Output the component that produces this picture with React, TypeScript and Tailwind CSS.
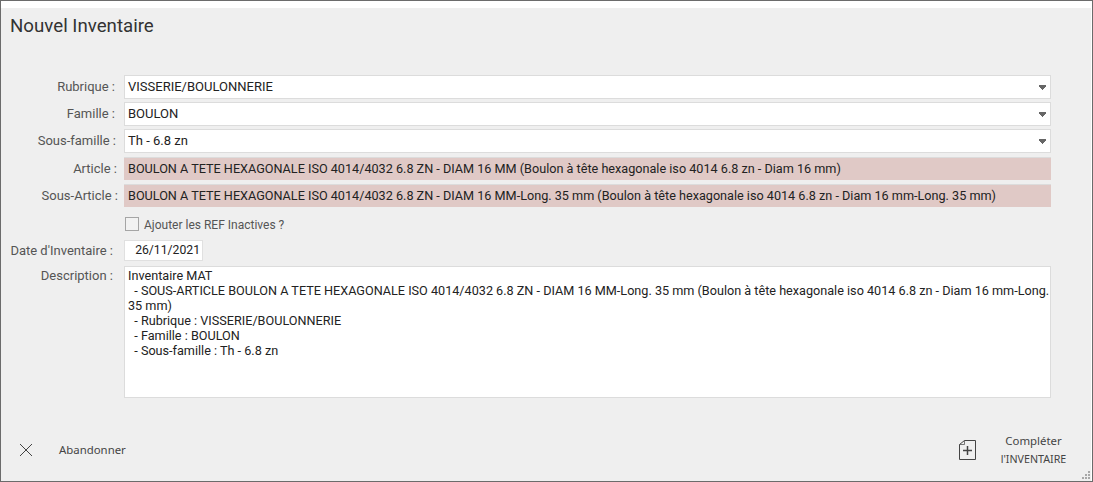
import React from 'react';

const Field: React.FC<{ className?: string; children: React.ReactNode }> = ({ className = '', children }) => (
    <div className={`w-[927px] flex items-center text-[#222] whitespace-nowrap ${className}`}>
        {children}
    </div>
);

const Label: React.FC<{ pr: string; children: React.ReactNode }> = ({ pr, children }) => (
    <div className={`w-[123px] shrink-0 text-right text-[13px] text-[#555] whitespace-nowrap ${pr}`}>{children}</div>
);

const SelectRow: React.FC<{ label: string; value: string; pr: string; mb: string }> = ({ label, value, pr, mb }) => (
    <div className={`flex items-center ${mb}`}>
        <Label pr={pr}>{label}</Label>
        <Field className="h-[24px] pl-[3px] pr-[4px] text-[13px] bg-white border border-[#dcdcdc] justify-between">
            <span>{value}</span>
            <svg width="7" height="5" viewBox="0 0 7 5" shapeRendering="crispEdges">
                <path d="M0 0H7V2H6V3H5V4H4V5H3V4H2V3H1V2H0Z" fill="#666" />
            </svg>
        </Field>
    </div>
);

const ArticleRow: React.FC<{ label: string; value: string; pr: string; mb: string }> = ({ label, value, pr, mb }) => (
    <div className={`flex items-center ${mb}`}>
        <Label pr={pr}>{label}</Label>
        <Field className="h-[23px] pl-[4px] text-[12.65px] bg-[#e0c9c6] border-t border-[#dcdcdc]">{value}</Field>
    </div>
);

export default function App() {
    return (
        <div className="w-[1093px] h-[482px] flex flex-col border border-[#6b6b6b] bg-[#efefef] shadow-[inset_-1px_0_0_#fff] font-['Roboto',sans-serif] overflow-hidden relative">
            <div className="h-[7px] bg-white shrink-0" />
            <h1 className="h-[67px] shrink-0 pl-[9px] pt-[8px] text-[18.7px] leading-[21px] text-[#333]">Nouvel Inventaire</h1>

            <SelectRow label="Rubrique :" value="VISSERIE/BOULONNERIE" pr="pr-[9px]" mb="mb-[3px]" />
            <SelectRow label="Famille :" value="BOULON" pr="pr-[9px]" mb="mb-[3px]" />
            <SelectRow label="Sous-famille :" value="Th - 6.8 zn" pr="pr-[8px]" mb="mb-[4px]" />
            <ArticleRow
                label="Article :"
                value="BOULON A TETE HEXAGONALE ISO 4014/4032 6.8 ZN - DIAM 16 MM (Boulon à tête hexagonale iso 4014 6.8 zn - Diam 16 mm)"
                pr="pr-[7px]"
                mb="mb-[4px]"
            />
            <ArticleRow
                label="Sous-Article :"
                value="BOULON A TETE HEXAGONALE ISO 4014/4032 6.8 ZN - DIAM 16 MM-Long. 35 mm (Boulon à tête hexagonale iso 4014 6.8 zn - Diam 16 mm-Long. 35 mm)"
                pr="pr-[6px]"
                mb="mb-[11px]"
            />

            <div className="flex items-center h-[14px] mb-[8px] pl-[124px]">
                <span className="w-[14px] h-[14px] mt-[-2px] border border-[#a5a5a5] bg-[#f2f2f2]" />
                <span className="ml-[5px] text-[12px] text-[#555]">Ajouter les REF Inactives ?</span>
            </div>

            <div className="flex items-center mb-[5px]">
                <Label pr="pr-[11px]">Date d'Inventaire :</Label>
                <div className="w-[79px] h-[21px] flex items-center justify-end pr-[2px] bg-white border border-[#e0e0e0] text-[12.2px] text-[#222]">
                    26/11/2021
                </div>
            </div>

            <div className="flex items-start">
                <Label pr="pr-[11px]">Description :</Label>
                <div className="w-[927px] h-[132px] bg-white border border-[#dcdcdc] pl-[3px] pt-[1px] text-[12.65px] leading-[15px] text-[#222] whitespace-pre overflow-hidden">
                    {`Inventaire MAT
  - SOUS-ARTICLE BOULON A TETE HEXAGONALE ISO 4014/4032 6.8 ZN - DIAM 16 MM-Long. 35 mm (Boulon à tête hexagonale iso 4014 6.8 zn - Diam 16 mm-Long.
35 mm)
  - Rubrique : VISSERIE/BOULONNERIE
  - Famille : BOULON
  - Sous-famille : Th - 6.8 zn`}
                </div>
            </div>

            <div className="flex-1 flex items-center justify-between pl-[18px] pr-[25px] pt-[21px] font-['Noto_Sans',sans-serif] text-[11.4px] text-[#444]">
                <div className="flex items-center">
                    <svg width="14" height="14" viewBox="0 0 14 14" fill="none" stroke="#444" strokeWidth="1">
                        <path d="M1 1L13 13M13 1L1 13" />
                    </svg>
                    <span className="ml-[26px]">Abandonner</span>
                </div>
                <div className="flex items-center">
                    <svg width="17" height="20" viewBox="0 0 17 20" fill="none" stroke="#444" strokeWidth="1">
                        <path d="M5.5 .5H16.5V19.5H.5V4.5Z" />
                        <path d="M5.5 .5V4.5H.5" strokeWidth="0.7" />
                        <path d="M8.5 6V15M4 10.5H13" strokeWidth="1.5" />
                    </svg>
                    <div className="w-[67px] ml-[24px] text-center leading-[18px]">
                        <div>Compléter</div>
                        <div className="text-[10.7px]">l'INVENTAIRE</div>
                    </div>
                </div>
            </div>

            <svg width="10" height="10" viewBox="0 0 10 10" fill="#a8a8a8" className="absolute right-[1px] bottom-[1px]">
                <rect x="7" y="1" width="2" height="2" />
                <rect x="4" y="4" width="2" height="2" />
                <rect x="7" y="4" width="2" height="2" />
                <rect x="1" y="7" width="2" height="2" />
                <rect x="4" y="7" width="2" height="2" />
                <rect x="7" y="7" width="2" height="2" />
            </svg>
        </div>
    );
}
